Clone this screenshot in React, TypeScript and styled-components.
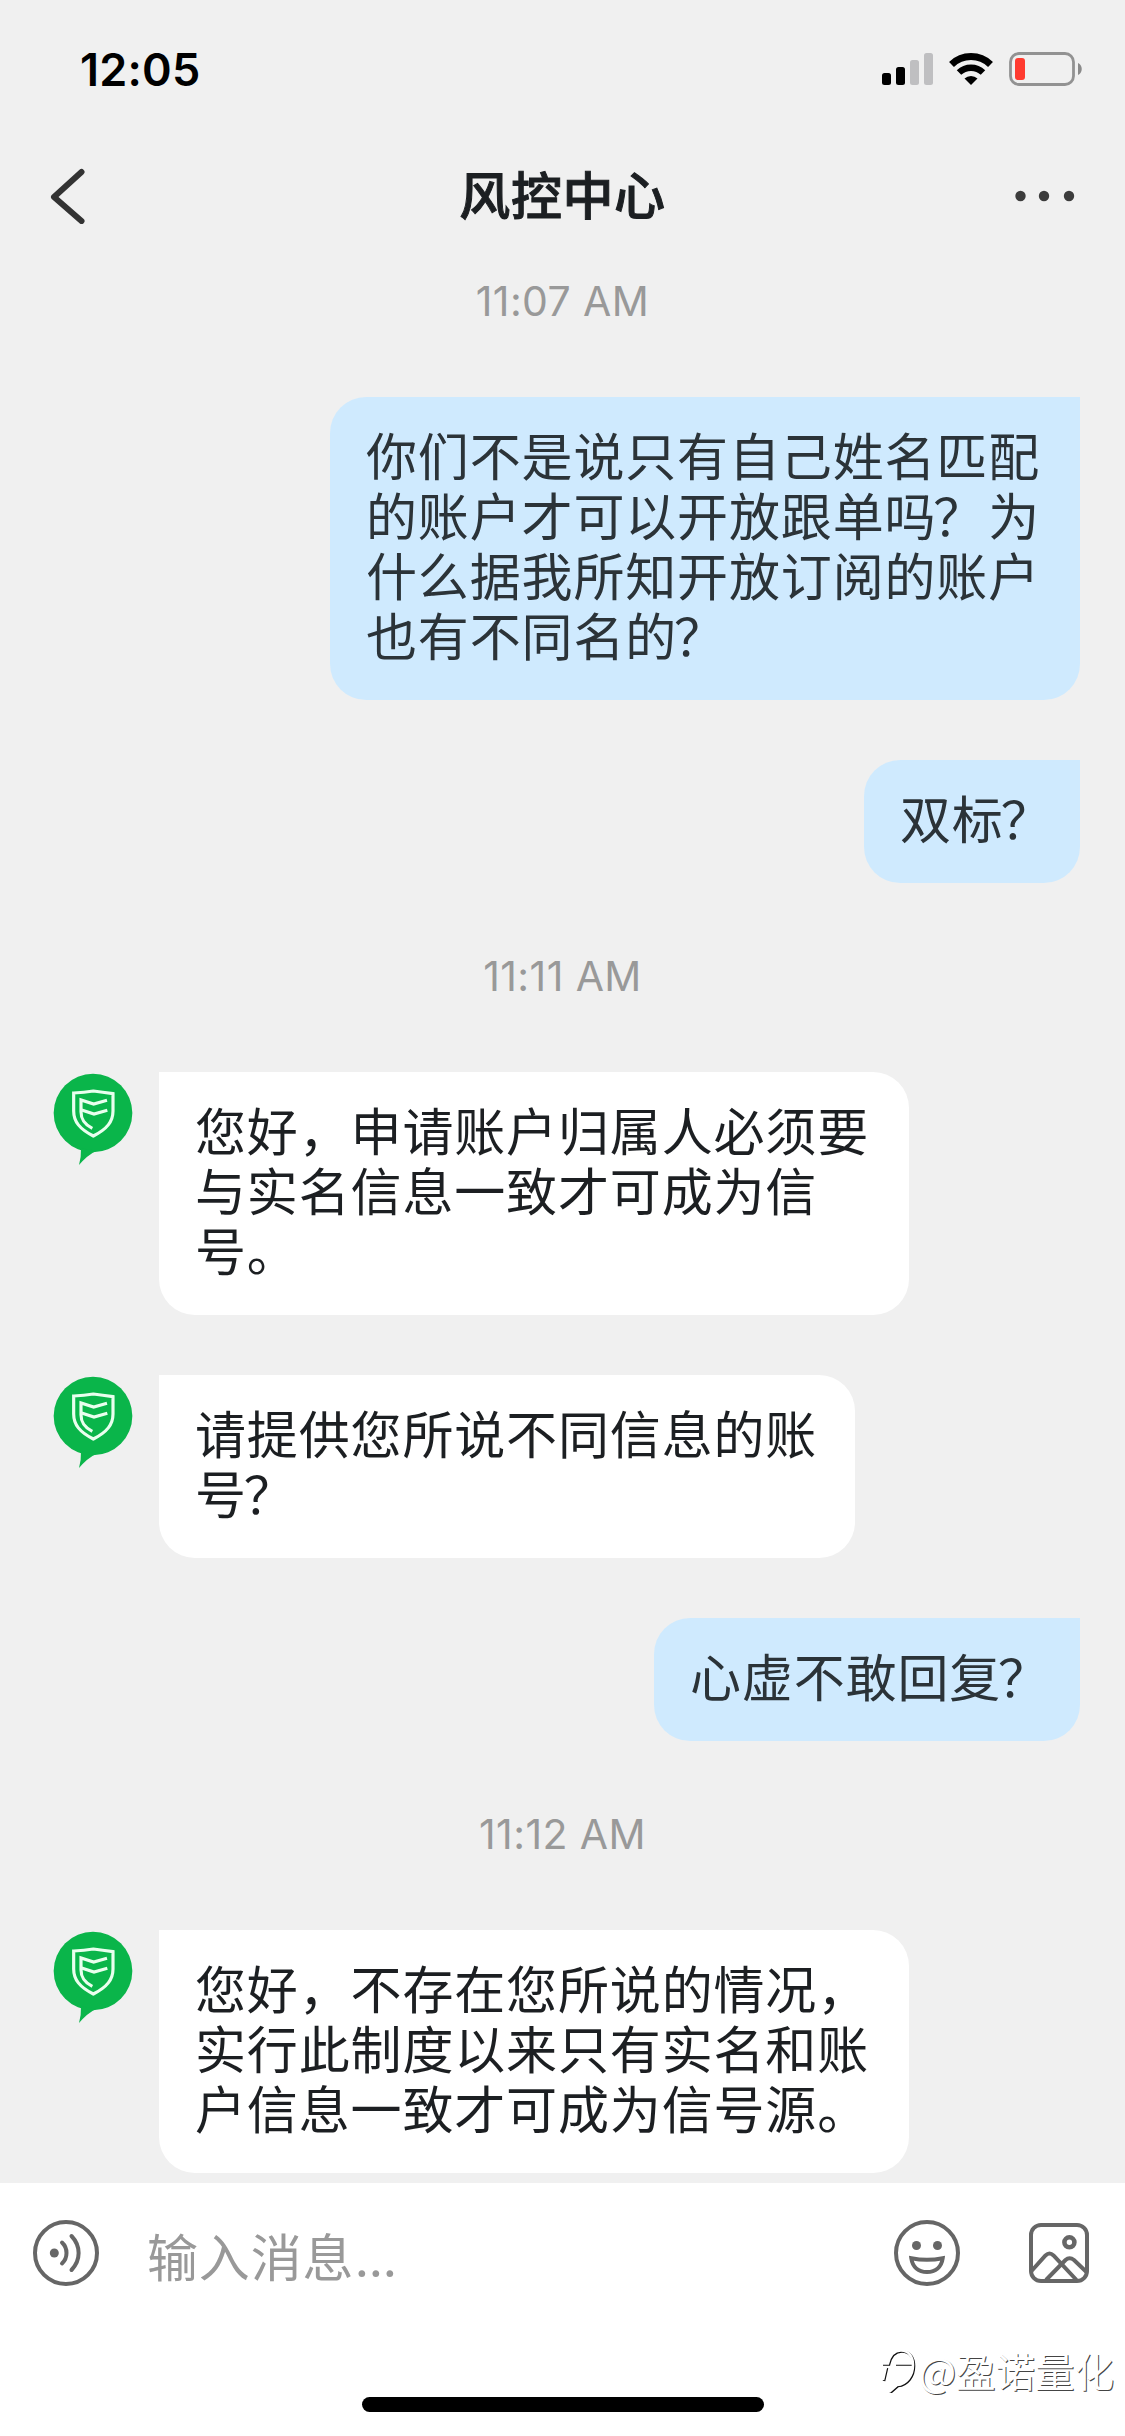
import React from 'react';
import styled, { createGlobalStyle } from 'styled-components';

const GlobalStyle = createGlobalStyle`
  *, *::before, *::after { box-sizing: border-box; }
  body { margin: 0; background: #f0f0f0; }
`;

const Screen = styled.div`
  display: flex;
  flex-direction: column;
  width: 1125px;
  height: 2436px;
  overflow: hidden;
  background: #f0f0f0;
  font-family: Inter, 'Noto Sans CJK SC', sans-serif;
`;

const StatusBar = styled.header`
  display: flex;
  justify-content: space-between;
  height: 132px;
  padding: 41px 42px 0 80px;
`;

const Clock = styled.span`
  font-size: 45px;
  font-weight: 600;
  line-height: 58px;
  letter-spacing: 0.2px;
  color: #000;
`;

const StatusIcons = styled.div`
  display: flex;
  gap: 15px;
  padding-top: 11px;
`;

const NavBar = styled.nav`
  display: grid;
  grid-template-columns: 1fr auto 1fr;
  align-items: center;
  height: 128px;
  padding: 0 50px;
`;

const Title = styled.h1`
  margin: 0;
  padding-top: 2px;
  font-size: 51px;
  font-weight: 500;
  line-height: 60px;
  letter-spacing: 0.6px;
  color: #1c1f22;
  -webkit-text-stroke: 1px #1c1f22;
`;

const NavButton = styled.button<{ $end?: boolean }>`
  display: flex;
  justify-self: ${(p) => (p.$end ? 'end' : 'start')};
  padding: 0;
  border: 0;
  background: none;
`;

const Conversation = styled.main`
  display: flex;
  flex: none;
  flex-direction: column;
  height: 1923px;
  padding-top: 16px;
`;

const Timestamp = styled.time<{ $first?: boolean }>`
  margin: ${(p) => (p.$first ? 0 : 68)}px 0 71px;
  font-size: 41px;
  line-height: 50px;
  letter-spacing: 0.4px;
  text-align: center;
  color: #999;
`;

const Row = styled.div<{ $mine?: boolean }>`
  display: flex;
  justify-content: ${(p) => (p.$mine ? 'flex-end' : 'flex-start')};
  gap: 26px;
  padding: 0 45px 0 53px;

  & + & { margin-top: 60px; }
`;

const Bubble = styled.p<{ $mine?: boolean; $width: number }>`
  width: ${(p) => p.$width}px;
  margin: 0;
  padding: 31px 0 32px 36px;
  border-radius: ${(p) => (p.$mine ? '36px 0 36px 36px' : '0 36px 36px 36px')};
  background: ${(p) => (p.$mine ? '#cfeafe' : '#fff')};
  color: ${(p) => (p.$mine ? '#2b3338' : '#1c1f22')};
  font-size: 51px;
  line-height: 60px;
  letter-spacing: 0.85px;
  white-space: nowrap;
`;

const Line = styled.span`
  display: block;
  height: 60px;
`;

const QuestionMark = styled.span`
  margin: 0 3px 0 -3px;
`;

const Composer = styled.footer`
  display: flex;
  flex: 1;
  flex-direction: column;
  background: #fff;
`;

const InputRow = styled.div`
  display: flex;
  align-items: center;
  height: 140px;
  padding: 0 36px 0 33px;
`;

const Placeholder = styled.span`
  flex: 1;
  margin-left: 48px;
  padding-top: 11px;
  font-size: 51px;
  line-height: 60px;
  letter-spacing: 0.85px;
  color: #999;
`;

const Ellipsis = styled.span`
  letter-spacing: -0.6px;
`;

const Tools = styled.div`
  display: flex;
  align-items: center;
  gap: 69px;
`;

const BottomArea = styled.div`
  position: relative;
  display: flex;
  flex: 1;
  justify-content: center;
  padding-top: 74px;
`;

const HomeIndicator = styled.div`
  width: 402px;
  height: 15px;
  border-radius: 8px;
  background: #000;
`;

const Watermark = styled.div`
  position: absolute;
  top: 19px;
  right: 11px;
  display: flex;
  align-items: center;
  gap: 2px;
  height: 56px;
  color: #fff;
  font-family: 'Noto Sans CJK SC', sans-serif;
  font-size: 39.5px;
  line-height: 56px;
  text-shadow: 1px 1px 0 #444;
`;

const SignalIcon = () => (
  <svg width="51" height="34" viewBox="0 0 51 34">
    <rect x="0" y="21" width="9" height="12" rx="2.5" />
    <rect x="14" y="15" width="9" height="18" rx="2.5" />
    <rect x="28" y="8" width="9" height="25" rx="2.5" fill="#bfbfc1" />
    <rect x="42" y="1" width="9" height="32" rx="2.5" fill="#bfbfc1" />
  </svg>
);

const WifiIcon = () => (
  <svg width="46" height="34" viewBox="0 0 46 34">
    <path d="M3.5 12.5A28 28 0 0 1 42.500 12.500" fill="none" stroke="#000" strokeWidth="7" />
    <path d="M11 20.500A17.500 17.500 0 0 1 35 20.500" fill="none" stroke="#000" strokeWidth="6.500" />
    <path d="M16.500 26.500A9.500 9.500 0 0 1 29.500 26.500L23 33Z" />
  </svg>
);

const BatteryIcon = () => (
  <svg width="74" height="34" viewBox="0 0 74 34">
    <rect x="1.500" y="1.500" width="63" height="31" rx="8.500" fill="none" stroke="#929292" strokeWidth="2.800" />
    <rect x="6" y="6" width="10" height="22" rx="3" fill="#ff3b30" />
    <path d="M69 11C74 13 74 21 69 23Z" fill="#8a8a8a" />
  </svg>
);

const BackIcon = () => (
  <svg width="36" height="56" viewBox="0 0 36 56">
    <path d="M31.500 4L4 29L31.500 53" fill="none" stroke="#333" strokeWidth="6" strokeLinecap="round" strokeLinejoin="round" />
  </svg>
);

const MoreIcon = () => (
  <svg width="60" height="12" viewBox="0 0 60 12" fill="#3c3c3c">
    <circle cx="5.500" cy="6" r="5.200" />
    <circle cx="29" cy="6" r="5.200" />
    <circle cx="54" cy="6" r="5.200" />
  </svg>
);

const AvatarSvg = styled.svg`
  flex: none;
`;

const AgentAvatar = () => (
  <AvatarSvg width="80" height="93" viewBox="24 21 240 279">
    <circle cx="144" cy="144" r="118" fill="#0ab54a" />
    <path d="M108 250Q109 275 102 300Q126 271 154 257Z" fill="#0ab54a" />
    <g fill="none" stroke="#e9ffee" strokeWidth="9.500">
      <path d="M86 84Q118 82 145 78Q172 82 204 86V138C204 170 186 192 145 213C104 192 86 170 86 138Z" />
      <path d="M186 106L146 117L108 105V140C108 164 118 178 142 190" />
      <path d="M110 135L147 147L187 136" />
    </g>
  </AvatarSvg>
);

const VoiceIcon = () => (
  <svg width="66" height="66" viewBox="0 0 66 66" fill="none" stroke="#666" strokeWidth="4" strokeLinecap="round">
    <circle cx="33" cy="33" r="31" />
    <circle cx="21.300" cy="33" r="4.500" fill="#666" stroke="none" />
    <path d="M29 22.500C35 28 35 38 29 43.500" />
    <path d="M38.500 16C48 26 48 40 38.500 50" />
  </svg>
);

const SmileIcon = () => (
  <svg width="66" height="66" viewBox="0 0 66 66" fill="none" stroke="#666" strokeWidth="4">
    <circle cx="33" cy="33" r="31" />
    <circle cx="22.500" cy="25.500" r="4.500" fill="#666" stroke="none" />
    <circle cx="43.500" cy="25.500" r="4.500" fill="#666" stroke="none" />
    <path d="M17.300 38.200Q33 41.500 48.700 38.200C47.500 47 41.500 52 33 52C24.500 52 18.500 47 17.300 38.200Z" />
  </svg>
);

const PictureIcon = () => (
  <svg width="60" height="60" viewBox="0 0 60 60" fill="none" stroke="#666" strokeWidth="4">
    <rect x="2" y="2" width="56" height="56" rx="10" />
    <circle cx="40.400" cy="19.300" r="5" strokeWidth="4.600" />
    <path d="M2.500 48L16.500 32.500Q20.500 28.500 24.500 32.500L47.500 57" />
    <path d="M17 57L36.500 37Q40.500 33.500 45 37L58 49.500" />
  </svg>
);

const WatermarkLogo = () => (
  <svg width="37" height="46" viewBox="0 0 37 46" fill="none" strokeWidth="2.600">
    {['#111', '#fff'].map((stroke, i) => (
      <g key={stroke} stroke={stroke} transform={i === 0 ? 'translate(1 1)' : undefined}>
        <path d="M2 16.500H8C10 8 15 3.500 21 3.500C29 3.500 33 10 33 18C33 28 27 37 17 38L9 45" />
        <path d="M15 16.500H33M6 20L3 33" />
      </g>
    ))}
  </svg>
);

type Message = { mine?: boolean; width: number; lines: string[] };

const renderLine = (line: string) =>
  line.split(/(？)/).map((part, i) => (part === '？' ? <QuestionMark key={i}>{part}</QuestionMark> : part));

const ChatMessage = ({ mine, width, lines }: Message) => (
  <Row $mine={mine}>
    {!mine && <AgentAvatar />}
    <Bubble $mine={mine} $width={width}>
      {lines.map((line) => (
        <Line key={line}>{renderLine(line)}</Line>
      ))}
    </Bubble>
  </Row>
);

export default function App() {
  return (
    <Screen lang="zh-CN">
      <GlobalStyle />
      <StatusBar>
        <Clock>12:05</Clock>
        <StatusIcons>
          <SignalIcon />
          <WifiIcon />
          <BatteryIcon />
        </StatusIcons>
      </StatusBar>
      <NavBar>
        <NavButton aria-label="返回"><BackIcon /></NavButton>
        <Title>风控中心</Title>
        <NavButton $end aria-label="更多"><MoreIcon /></NavButton>
      </NavBar>
      <Conversation>
        <Timestamp $first>11:07 AM</Timestamp>
        <ChatMessage
          mine
          width={750}
          lines={['你们不是说只有自己姓名匹配', '的账户才可以开放跟单吗？为', '什么据我所知开放订阅的账户', '也有不同名的？']}
        />
        <ChatMessage mine width={216} lines={['双标？']} />
        <Timestamp>11:11 AM</Timestamp>
        <ChatMessage width={750} lines={['您好，申请账户归属人必须要', '与实名信息一致才可成为信', '号。']} />
        <ChatMessage width={696} lines={['请提供您所说不同信息的账', '号？']} />
        <ChatMessage mine width={426} lines={['心虚不敢回复？']} />
        <Timestamp>11:12 AM</Timestamp>
        <ChatMessage
          width={750}
          lines={['您好，不存在您所说的情况，', '实行此制度以来只有实名和账', '户信息一致才可成为信号源。']}
        />
      </Conversation>
      <Composer>
        <InputRow>
          <VoiceIcon />
          <Placeholder>输入消息<Ellipsis>...</Ellipsis></Placeholder>
          <Tools>
            <SmileIcon />
            <PictureIcon />
          </Tools>
        </InputRow>
        <BottomArea>
          <HomeIndicator />
          <Watermark>
            <WatermarkLogo />
            @盈诺量化
          </Watermark>
        </BottomArea>
      </Composer>
    </Screen>
  );
}
